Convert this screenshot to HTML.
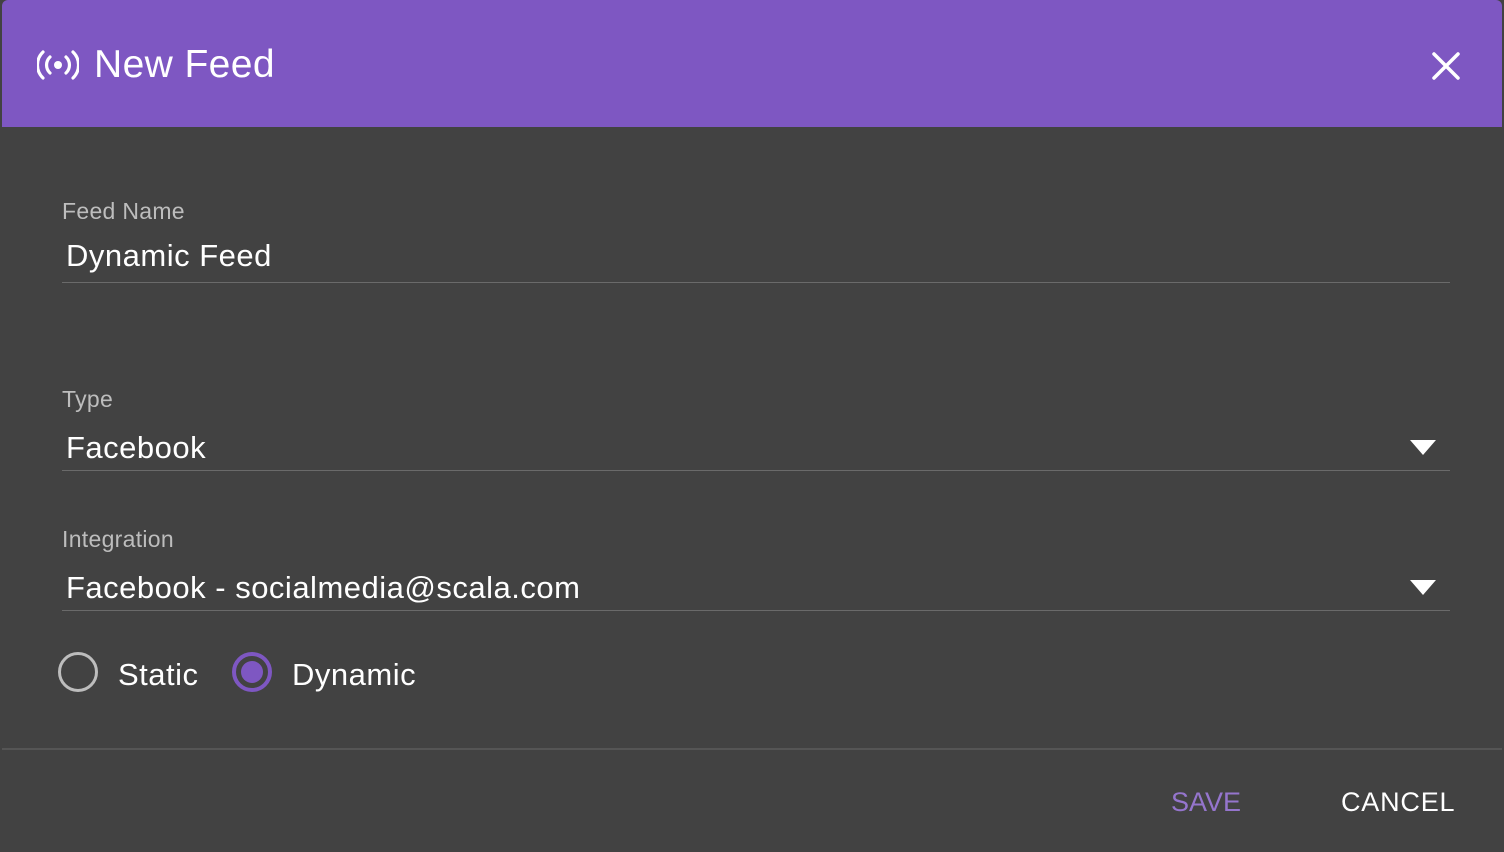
<!DOCTYPE html>
<html><head><style>
body{margin:0;width:1504px;height:852px;background:#424242;font-family:"Liberation Sans",sans-serif;overflow:hidden;position:relative}
.hdr{position:absolute;left:2px;top:0;width:1500px;height:127px;background:#7e57c2;border-top-left-radius:6px;border-top-right-radius:6px}
.t{position:absolute;color:#fff}
.lbl{position:absolute;color:#bdbdbd;font-size:23px;letter-spacing:0.3px}
.val{position:absolute;color:#fff;font-size:31px;letter-spacing:0.5px}
.line{position:absolute;left:62px;width:1388px;height:1px;background:#6a6a6a}
.arr{position:absolute;left:1410px;width:0;height:0;border-left:13px solid transparent;border-right:13px solid transparent;border-top:15px solid #fff}
</style></head><body>
<div class="hdr"></div>
<svg style="position:absolute;left:37px;top:50px" width="42" height="30" viewBox="0 0 42 30">
<circle cx="21" cy="15" r="4" fill="#fff"/>
<path d="M13 7 A11 11 0 0 0 13 23 M29 7 A11 11 0 0 1 29 23" stroke="#fff" stroke-width="3.2" fill="none" stroke-linecap="round"/>
<path d="M6 2 A18 18 0 0 0 6 28 M36 2 A18 18 0 0 1 36 28" stroke="#fff" stroke-width="3.2" fill="none" stroke-linecap="round"/>
</svg>
<div class="t" style="left:94px;top:43px;font-size:39px;letter-spacing:0.4px">New Feed</div>
<svg style="position:absolute;left:1432px;top:52px" width="28" height="28"><path d="M2 2L26 26M26 2L2 26" stroke="#fff" stroke-width="3.5" stroke-linecap="round"/></svg>
<div class="lbl" style="left:62px;top:198px">Feed Name</div>
<div class="val" style="left:66px;top:238px">Dynamic Feed</div>
<div class="line" style="top:282px"></div>
<div class="lbl" style="left:62px;top:386px">Type</div>
<div class="val" style="left:66px;top:430px">Facebook</div>
<div class="arr" style="top:440px"></div>
<div class="line" style="top:470px"></div>
<div class="lbl" style="left:62px;top:526px">Integration</div>
<div class="val" style="left:66px;top:570px">Facebook - socialmedia@scala.com</div>
<div class="arr" style="top:580px"></div>
<div class="line" style="top:610px"></div>
<div style="position:absolute;left:58px;top:652px;width:40px;height:40px;border:3px solid #bdbdbd;border-radius:50%;box-sizing:border-box"></div>
<div class="val" style="left:118px;top:657px">Static</div>
<div style="position:absolute;left:232px;top:652px;width:40px;height:40px;border:4px solid #7e57c2;border-radius:50%;box-sizing:border-box"></div>
<div style="position:absolute;left:241px;top:661px;width:22px;height:22px;background:#7e57c2;border-radius:50%"></div>
<div class="val" style="left:292px;top:657px">Dynamic</div>
<div style="position:absolute;left:2px;top:748px;width:1500px;height:2px;background:#555"></div>
<div class="t" style="left:1171px;top:787px;font-size:27px;color:#9575cd">SAVE</div>
<div class="t" style="left:1341px;top:787px;font-size:27px;letter-spacing:0.8px">CANCEL</div>
</body></html>
